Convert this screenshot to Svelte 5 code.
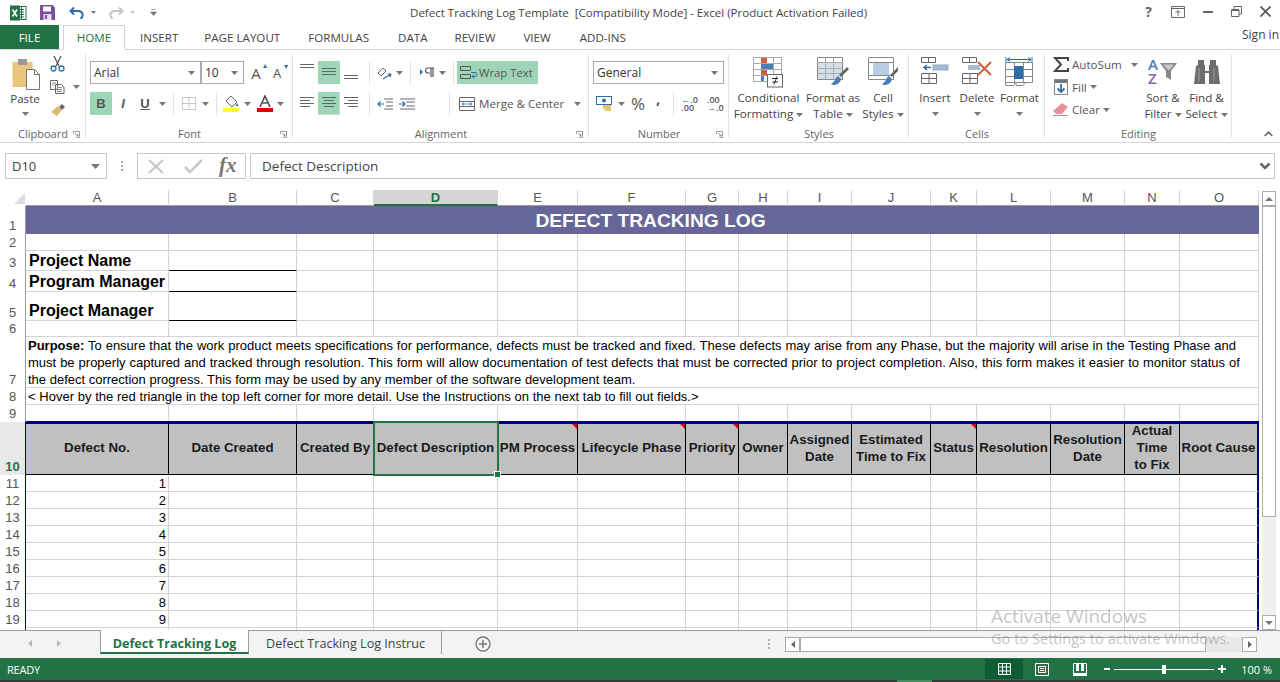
<script lang="ts">
	const columns = [
		{ name: 'A', width: 143 },
		{ name: 'B', width: 128 },
		{ name: 'C', width: 77 },
		{ name: 'D', width: 124 },
		{ name: 'E', width: 80 },
		{ name: 'F', width: 108 },
		{ name: 'G', width: 53 },
		{ name: 'H', width: 49 },
		{ name: 'I', width: 64 },
		{ name: 'J', width: 79 },
		{ name: 'K', width: 46 },
		{ name: 'L', width: 74 },
		{ name: 'M', width: 74 },
		{ name: 'N', width: 55 },
		{ name: 'O', width: 79 }
	];
	// row 20 is only a sliver above the sheet tabs
	const rowHeights = [28, 17, 20, 21, 29, 16, 51, 17, 17, 53, 17, 17, 17, 17, 17, 17, 17, 17, 17, 17];
	const headers = [
		{ t: 'Defect No.' },
		{ t: 'Date Created' },
		{ t: 'Created By' },
		{ t: 'Defect Description', active: true },
		{ t: 'PM Process', mark: true },
		{ t: 'Lifecycle Phase', mark: true },
		{ t: 'Priority', mark: true },
		{ t: 'Owner' },
		{ t: 'Assigned\nDate' },
		{ t: 'Estimated\nTime to Fix' },
		{ t: 'Status', mark: true },
		{ t: 'Resolution' },
		{ t: 'Resolution\nDate' },
		{ t: 'Actual\nTime\nto Fix' },
		{ t: 'Root Cause' }
	];
	const gridCols = columns.map((c) => c.width + 'px').join(' ');
	const gridRows = rowHeights.map((h) => h + 'px').join(' ');
	const defects = [1, 2, 3, 4, 5, 6, 7, 8, 9, ''];
	const middleColumns = columns.slice(1, -1);
</script>

{#snippet caret()}
	<svg class="caret" width="7" height="4" viewBox="0 0 7 4"><path d="M0 0h7L3.5 4z" fill="#777" /></svg>
{/snippet}

{#snippet launcher()}
	<svg class="launcher" width="7" height="7" viewBox="0 0 7 7"><path d="M.5 3V.5H6.500V6.500H3.500M2 2l3 3M5 3v2H3" fill="none" stroke="#888" stroke-width="0.800" /></svg>
{/snippet}

<div class="app">
	<header class="titlebar">
		<div class="qat">
			<svg width="17" height="16" viewBox="0 0 17 16">
				<rect x="6" y="1.5" width="10" height="13" fill="#fff" stroke="#217346" />
				<path d="M9 4.5h5M9 7h5M9 9.500h5M9 12h5M11.500 2v12" stroke="#217346" />
				<rect x="0" y="0.500" width="10" height="15" fill="#217346" />
				<path d="M2.500 4.500l4.500 7M7 4.500l-4.500 7" stroke="#fff" stroke-width="1.600" />
			</svg>
			<svg class="save" width="15" height="15" viewBox="0 0 15 15">
				<path d="M0 0h12.500L15 2.500V15H0z" fill="#7b4f9e" />
				<rect x="3" y="1.500" width="8" height="5" fill="#fff" />
				<rect x="3.500" y="9" width="8" height="6" fill="#e8e0ef" />
				<rect x="5" y="10" width="2" height="4" fill="#7b4f9e" />
			</svg>
			<svg class="undo" width="16" height="14" viewBox="0 0 16 14">
				<path d="M5 1.500L1.500 5 5 8.500" fill="none" stroke="#2f6ca8" stroke-width="2" />
				<path d="M2 5h7.500a4 4 0 0 1 3 6.800l-1 1" fill="none" stroke="#2f6ca8" stroke-width="2" />
			</svg>
			<svg class="q-caret" width="5" height="3" viewBox="0 0 5 3"><path d="M0 0h5L2.500 3z" fill="#777" /></svg>
			<svg class="redo" width="16" height="14" viewBox="0 0 16 14">
				<path d="M11 1.500L14.500 5 11 8.500" fill="none" stroke="#c4c4c4" stroke-width="2" />
				<path d="M14 5H6.500a4 4 0 0 0-3 6.800l1 1" fill="none" stroke="#c4c4c4" stroke-width="2" />
			</svg>
			<svg class="q-caret" width="5" height="3" viewBox="0 0 5 3"><path d="M0 0h5L2.500 3z" fill="#c4c4c4" /></svg>
			<svg class="custom" width="7" height="7" viewBox="0 0 7 7"><path d="M1 0.500h5M0.500 3h6L3.500 6.500z" fill="#777" stroke="#777" stroke-width="0.600" /></svg>
		</div>
		<div class="title">Defect Tracking Log Template&nbsp; [Compatibility Mode] - Excel (Product Activation Failed)</div>
		<div class="winbtns">
			<span class="help">?</span>
			<svg width="14" height="12" viewBox="0 0 14 12"><path d="M.5.500h13v11H.500zM.5 2.500h13M7 10V5M4.500 7L7 4.500 9.500 7" fill="none" stroke="#666" /></svg>
			<svg width="10" height="2" viewBox="0 0 10 2"><rect width="10" height="2" fill="#666" /></svg>
			<svg width="11" height="11" viewBox="0 0 11 11"><path d="M3 3V.500h7.500V8H8M.5 3.500H8v7H.5zM.5 4.500H8" fill="none" stroke="#666" /></svg>
			<svg width="11" height="11" viewBox="0 0 11 11"><path d="M.5.500l10 10M10.500.500l-10 10" stroke="#555" stroke-width="1.700" /></svg>
		</div>
	</header>

	<nav class="tabs">
		<div class="tab file">FILE</div>
		<div class="tab active">HOME</div>
		<div class="tab insert">INSERT</div>
		<div class="tab pagelayout">PAGE LAYOUT</div>
		<div class="tab formulas">FORMULAS</div>
		<div class="tab data">DATA</div>
		<div class="tab review">REVIEW</div>
		<div class="tab view">VIEW</div>
		<div class="tab addins">ADD-INS</div>
		<div class="signin">Sign in</div>
	</nav>

	<section class="ribbon">
		<div class="group clipboard">
			<div class="group-body">
				<div class="paste">
					<svg width="30" height="32" viewBox="0 0 30 32">
						<rect x="0.500" y="4" width="20" height="25" fill="#e9c57e" />
						<rect x="6" y="1" width="9" height="6" fill="#9a9a9a" />
						<path d="M14.500 11.500h8l5 5v15h-13z" fill="#fff" stroke="#777" />
						<path d="M22.500 11.500v5h5" fill="none" stroke="#777" />
					</svg>
					<span>Paste</span>
					{@render caret()}
				</div>
				<div class="clip-tools">
					<svg width="15" height="16" viewBox="0 0 15 16">
						<path d="M4 0l5 10M11 0L6 10" stroke="#555" stroke-width="1.300" />
						<circle cx="3.500" cy="12.500" r="2.500" fill="none" stroke="#2f6ca8" stroke-width="1.300" />
						<circle cx="11.500" cy="12.500" r="2.500" fill="none" stroke="#2f6ca8" stroke-width="1.300" />
					</svg>
					<div class="copy">
						<svg width="15" height="14" viewBox="0 0 15 14">
							<path d="M.5.500h7v9h-7zM5.500 4.500h6l2.500 2.500v6.500H5.500z" fill="#fff" stroke="#666" />
							<path d="M7 7.500h5M7 9.500h5M7 11.500h5M2 3h4M2 5h2" stroke="#888" />
						</svg>
						{@render caret()}
					</div>
					<svg width="16" height="14" viewBox="0 0 16 14">
						<path d="M9 5l3-3 3 3-3 3z" fill="#666" />
						<path d="M1 10l7-6 4 4-5 6z" fill="#e0b878" />
					</svg>
				</div>
			</div>
			<div class="group-label">Clipboard{@render launcher()}</div>
		</div>

		<div class="group font">
			<div class="group-body col">
				<div class="rowline">
					<div class="select fontname"><span>Arial</span>{@render caret()}</div>
					<div class="select fontsize"><span>10</span>{@render caret()}</div>
					<span class="grow">A<i>▴</i></span>
					<span class="shrink">A<i>▾</i></span>
				</div>
				<div class="rowline second">
					<span class="fmt on bold">B</span>
					<span class="fmt italic">I</span>
					<span class="fmt under">U</span>
					{@render caret()}
					<span class="sep"></span>
					<svg class="borders" width="14" height="13" viewBox="0 0 14 13"><path d="M.5.500h13v12H.5zM7 .5v12M.5 6.500h13" fill="none" stroke="#999" stroke-dasharray="1 1" /></svg>
					{@render caret()}
					<span class="sep"></span>
					<svg class="fill" width="17" height="17" viewBox="0 0 17 17">
						<path d="M8 1l6 6-5 5-6-6z" fill="#fff" stroke="#666" />
						<path d="M14 8l1.500 3h-3z" fill="#2f6ca8" />
						<rect x="0" y="13" width="16" height="4" fill="#ffff33" />
					</svg>
					{@render caret()}
					<svg class="color" width="16" height="17" viewBox="0 0 16 17">
						<path d="M3 12L8 1l5 11M5 8h6" fill="none" stroke="#555" stroke-width="1.700" />
						<rect y="13" width="16" height="4" fill="#e00000" />
					</svg>
					{@render caret()}
				</div>
			</div>
			<div class="group-label">Font{@render launcher()}</div>
		</div>

		<div class="group align">
			<div class="group-body col">
				<div class="rowline">
					<span class="ab top"><i></i><i></i></span>
					<span class="ab mid on"><i></i><i></i><i></i></span>
					<span class="ab bot"><i></i><i></i></span>
					<span class="sep"></span>
					<svg class="orient" width="15" height="16" viewBox="0 0 15 16">
						<path d="M1 8l5-5 3 3-5 5z" fill="none" stroke="#666" />
						<path d="M6 14l8-5M14 9h-3M14 9l-1 3" fill="none" stroke="#2f6ca8" stroke-width="1.100" />
					</svg>
					{@render caret()}
					<span class="sep"></span>
					<svg class="para" width="15" height="12" viewBox="0 0 15 12">
						<path d="M0 2l3 3-3 3z" fill="#2f6ca8" />
						<path d="M8 1h6M11 1v9M8 1a2.500 2.500 0 0 0 0 5h2M13 1v9" fill="none" stroke="#555" stroke-width="1.200" />
					</svg>
					{@render caret()}
					<span class="sep"></span>
					<div class="wide on">
						<svg width="18" height="14" viewBox="0 0 18 14">
							<path d="M.5.500h10v4h-10zM.5 8.500h10v4h-10z" fill="none" stroke="#555" />
							<path d="M11 6.500h4a2 2 0 0 1 0 4h-3M14 8.500L12 10.500l2 2" fill="none" stroke="#2f6ca8" />
						</svg>
						<span>Wrap Text</span>
					</div>
				</div>
				<div class="rowline second">
					<span class="ah"><i class="f"></i><i class="s"></i><i class="f"></i><i class="s"></i></span>
					<span class="ah c on"><i class="f"></i><i class="s"></i><i class="f"></i><i class="s"></i></span>
					<span class="ah r"><i class="f"></i><i class="s"></i><i class="f"></i><i class="s"></i></span>
					<span class="sep"></span>
					<svg class="indent" width="17" height="12" viewBox="0 0 17 12">
						<path d="M7 1h9M9 4h7M9 8h7M7 11h9" stroke="#666" />
						<path d="M7 6H1M3.500 3.500L1 6l2.500 2.500" fill="none" stroke="#2f6ca8" stroke-width="1.200" />
					</svg>
					<svg class="indent" width="17" height="12" viewBox="0 0 17 12">
						<path d="M1 1h15M7 4h9M7 8h9M1 11h15" stroke="#666" />
						<path d="M0 6h6M3.500 3.500L6 6 3.500 8.500" fill="none" stroke="#2f6ca8" stroke-width="1.200" />
					</svg>
					<span class="sep wrapsep"></span>
					<div class="wide merge">
						<svg width="17" height="14" viewBox="0 0 17 14">
							<path d="M.5.500h15v13H.5zM.5 4.500h15M.5 9.500h15" fill="none" stroke="#666" />
							<path d="M3 7h10M5 5.500L3 7l2 1.500M11 5.500L13 7l-2 1.500" fill="none" stroke="#2f6ca8" stroke-width="0.800" />
						</svg>
						<span>Merge &amp; Center</span>
						{@render caret()}
					</div>
				</div>
			</div>
			<div class="group-label">Alignment{@render launcher()}</div>
		</div>

		<div class="group number">
			<div class="group-body col">
				<div class="select general"><span>General</span>{@render caret()}</div>
				<div class="rowline second numrow">
					<svg class="acct" width="18" height="15" viewBox="0 0 18 15">
						<rect x="0.500" y="0.500" width="15" height="8" fill="#fff" stroke="#2f6ca8" />
						<circle cx="8" cy="4.500" r="2" fill="#2f6ca8" />
						<path d="M7 10h8M7 12h8M9 14h6" stroke="#e0b040" stroke-width="1.300" />
					</svg>
					{@render caret()}
					<span class="pct">%</span>
					<span class="comma">,</span>
					<span class="sep"></span>
					<span class="dec"><b class="ar">←</b>.0<br />.00</span>
					<span class="dec second-dec">.00<br /><b class="ar">→</b>.0</span>
				</div>
			</div>
			<div class="group-label">Number{@render launcher()}</div>
		</div>

		<div class="group styles">
			<div class="group-body big-row">
				<div class="big cond">
					<svg width="32" height="31" viewBox="0 0 32 31">
						<path d="M.5.500h28v24H.5zM10.500.5v24M20.500.5v24M.5 6.500h28M.5 12.500h28M.5 18.500h28" fill="#fff" stroke="#aaa" />
						<rect x="8" y="1" width="6" height="5" fill="#d1603d" />
						<rect x="8" y="7" width="12" height="5" fill="#4a7ebb" />
						<rect x="8" y="13" width="6" height="5" fill="#d1603d" />
						<rect x="8" y="19" width="3" height="5" fill="#4a7ebb" />
						<rect x="14.500" y="17.500" width="15" height="12.500" fill="#fff" stroke="#666" />
						<path d="M19 21.500h6M19 25h6M24 19.500l-3 8" stroke="#333" fill="none" />
					</svg>
					<span>Conditional</span>
					<span>Formatting {@render caret()}</span>
				</div>
				<div class="big fmt-table">
					<svg width="32" height="31" viewBox="0 0 32 31">
						<path d="M.5.500h25v22H.5z" fill="#fff" stroke="#888" />
						<rect x="1" y="5" width="24" height="17" fill="#d5dfec" />
						<path d="M.5 5.500h25M.5 11.500h25M.5 16.500h25M8.500.5v22M16.500.5v22" stroke="#aaa" fill="none" />
						<path d="M30 10L22 18l2 2 8-8z" fill="#666" />
						<path d="M21 19c-3 1-2 5-7 8 5 3 10-2 10-5z" fill="#4a7ebb" />
					</svg>
					<span>Format as</span>
					<span>Table {@render caret()}</span>
				</div>
				<div class="big cell">
					<svg width="30" height="31" viewBox="0 0 30 31">
						<path d="M.5.500h25v22H.5z" fill="#fff" stroke="#888" />
						<rect x="5" y="6" width="16" height="12" fill="#b8cce4" />
						<path d="M.5 5.500h25M.5 18.500h25" stroke="#888" fill="none" />
						<path d="M30 10L22 18l2 2 8-8z" fill="#666" />
						<path d="M21 19c-3 1-2 5-7 8 5 3 10-2 10-5z" fill="#4a7ebb" />
					</svg>
					<span>Cell</span>
					<span>Styles {@render caret()}</span>
				</div>
			</div>
			<div class="group-label">Styles</div>
		</div>

		<div class="group cells">
			<div class="group-body big-row">
				<div class="big ins">
					<svg width="28" height="31" viewBox="0 0 28 31">
						<path d="M.5.500h14v5H.5zM7.500.5v5M.5 16.500h15v10H.5zM8 16.500v10M.5 21.500h15" fill="none" stroke="#666" />
						<rect x="12" y="8" width="15" height="5" fill="#a6bcd6" stroke="#8fa8c4" />
						<path d="M10 10.500H3M6 8L3 10.500 6 13" fill="none" stroke="#2f6ca8" stroke-width="1.500" />
					</svg>
					<span>Insert</span>
					{@render caret()}
				</div>
				<div class="big del">
					<svg width="30" height="31" viewBox="0 0 30 31">
						<path d="M.5.500h14v5H.5zM7.500.5v5M.5 16.500h15v10H.5zM8 16.500v10M.5 21.500h15" fill="none" stroke="#666" />
						<rect x="6" y="8" width="12" height="5" fill="#a6bcd6" />
						<path d="M16 5l13 13M29 5L16 18" stroke="#d1603d" stroke-width="2" />
					</svg>
					<span>Delete</span>
					{@render caret()}
				</div>
				<div class="big format">
					<svg width="29" height="31" viewBox="0 0 29 31">
						<path d="M1 0v5M27 0v5M2 2.500h24M2 2.500l3-2M2 2.500l3 2M26 2.500l-3-2M26 2.500l-3 2" fill="none" stroke="#2f6ca8" />
						<path d="M.5 5.500h27v20H.5zM9.500 5.500v20M18.500 5.500v20M.5 12.500h27M.5 19.500h27" fill="#fff" stroke="#888" />
						<rect x="9" y="9" width="9" height="13" fill="#2f6ca8" />
						<path d="M.5 25.500v3h8l2-3M11 25.500v3h7l2-3" fill="none" stroke="#888" />
					</svg>
					<span>Format</span>
					{@render caret()}
				</div>
			</div>
			<div class="group-label">Cells</div>
		</div>

		<div class="group editing">
			<div class="group-body edit-body">
				<div class="edit-list">
					<div class="edit-item sum">
						<svg width="16" height="15" viewBox="0 0 16 15"><path d="M15 4V1H2l6 6.500L2 14h13v-3" fill="none" stroke="#444" stroke-width="2" /></svg>
						<span>AutoSum</span>
						{@render caret()}
					</div>
					<div class="edit-item">
						<svg width="14" height="16" viewBox="0 0 14 16"><rect x="0.500" y="0.500" width="13" height="15" fill="#fff" stroke="#888" /><rect x="1" y="1" width="12" height="3" fill="#777" /><path d="M7 5v8M3.500 9.500L7 13l3.500-3.500" fill="none" stroke="#2f6ca8" stroke-width="1.800" /></svg>
						<span>Fill</span>
						{@render caret()}
					</div>
					<div class="edit-item">
						<svg width="16" height="13" viewBox="0 0 16 13"><path d="M9 0l6 4-6 7H3L0 8z" fill="#e8909c" /><path d="M0 12.500h15" stroke="#999" /></svg>
						<span>Clear</span>
						{@render caret()}
					</div>
				</div>
				<div class="big sort">
					<div class="sort-icon">
						<span class="az a">A</span>
						<span class="az z">Z</span>
						<svg width="18" height="18" viewBox="0 0 18 18"><path d="M0 0h17l-6 8v9l-5-3V8z" fill="#888" /><path d="M3 1.500h11L9.500 7H8z" fill="#c8c8c8" /></svg>
					</div>
					<span>Sort &amp;</span>
					<span>Filter {@render caret()}</span>
				</div>
				<div class="big find">
					<svg width="26" height="24" viewBox="0 0 26 24">
						<path d="M4 0h6v5h1v6h4V5h1V0h6v5l2 1 2 18H15V13h-4v11H0L2 6l2-1z" fill="#6d6d6d" />
						<path d="M5 8v13M20 8v13" stroke="#8f8f8f" stroke-width="1.500" />
					</svg>
					<span>Find &amp;</span>
					<span>Select {@render caret()}</span>
				</div>
			</div>
			<div class="group-label">Editing</div>
		</div>
		<svg class="collapse" width="9" height="6" viewBox="0 0 9 6"><path d="M.7 5l3.800-3.800L8.300 5" fill="none" stroke="#666" stroke-width="1.600" /></svg>
	</section>

	<div class="formulabar">
		<div class="namebox"><span>D10</span><svg width="9" height="5" viewBox="0 0 9 5"><path d="M0 0h9L4.500 5z" fill="#777" /></svg></div>
		<div class="dots"><i></i><i></i><i></i></div>
		<div class="fx-btns">
			<svg width="18" height="15" viewBox="0 0 18 15"><path d="M2 1l14 13M16 1L2 14" stroke="#c8c8c8" stroke-width="2.200" /></svg>
			<svg width="19" height="15" viewBox="0 0 19 15"><path d="M1 8l5 5L18 1" fill="none" stroke="#c8c8c8" stroke-width="2.600" /></svg>
			<span class="fx">fx</span>
		</div>
		<div class="formula-input">
			<span>Defect Description</span>
			<svg width="12" height="8" viewBox="0 0 12 8"><path d="M1.500 1.500L6 6l4.500-4.500" fill="none" stroke="#666" stroke-width="2.500" /></svg>
		</div>
	</div>

	<main class="sheetarea">
		<div class="sheet">
			<div class="corner-row">
				<div class="corner"><svg width="11" height="11" viewBox="0 0 11 11"><path d="M11 0v11H0z" fill="#dcdcdc" /></svg></div>
				<div class="colheads" style="grid-template-columns: {gridCols}">
					{#each columns as c}
						<div class="colhead" class:sel={c.name === 'D'}>{c.name}</div>
					{/each}
				</div>
			</div>
			<div class="body-row">
				<div class="rowheads" style="grid-template-rows: {gridRows}">
					{#each rowHeights as _, i}
						<div class="rowhead" class:sel={i === 9} class:framed={i >= 9}>{i < 19 ? i + 1 : ''}</div>
					{/each}
				</div>
				<div class="cells-grid" style="grid-template-columns: {gridCols}; grid-template-rows: {gridRows}">
					<div class="title-cell">DEFECT TRACKING LOG</div>

					{#each columns as _}<div class="c"></div>{/each}

					<div class="c label">Project Name</div>
					<div class="c ul"></div>
					{#each columns.slice(2) as _}<div class="c"></div>{/each}

					<div class="c label">Program Manager</div>
					<div class="c ul"></div>
					{#each columns.slice(2) as _}<div class="c"></div>{/each}

					<div class="c label">Project Manager</div>
					<div class="c ul"></div>
					{#each columns.slice(2) as _}<div class="c"></div>{/each}

					{#each columns as _}<div class="c"></div>{/each}

					<div class="purpose">
						<p class="l1"><b>Purpose:</b> To ensure that the work product meets specifications for performance, defects must be tracked and fixed. These defects may arise from any Phase, but the majority will arise in the Testing Phase and</p>
						<p class="l2">must be properly captured and tracked through resolution. This form will allow documentation of test defects that must be corrected prior to project completion. Also, this form makes it easier to monitor status of</p>
						<p>the defect correction progress. This form may be used by any member of the software development team.</p>
					</div>
					<div class="hover-note">&lt; Hover by the red triangle in the top left corner for more detail. Use the Instructions on the next tab to fill out fields.&gt;</div>

					{#each columns as _}<div class="c"></div>{/each}

					{#each headers as h, i}
						<div class="th" class:active={h.active} class:end={i === headers.length - 1}>
							<span>{h.t}</span>
							{#if h.mark}<i class="redmark"></i>{/if}
							{#if h.active}<i class="handle"></i>{/if}
						</div>
					{/each}

					{#each defects as n}
						<div class="c num">{n}</div>
						{#each middleColumns as _}<div class="c"></div>{/each}
						<div class="c framed-end"></div>
					{/each}
				</div>
			</div>
		</div>
		<div class="vscroll">
			<div class="sbtn"><svg width="8" height="4" viewBox="0 0 8 4"><path d="M0 4h8L4 0z" fill="#777" /></svg></div>
			<div class="thumb"></div>
			<div class="sbtn"><svg width="8" height="4" viewBox="0 0 8 4"><path d="M0 0h8L4 4z" fill="#777" /></svg></div>
		</div>
	</main>

	<div class="sheetbar">
		<div class="navs">
			<svg width="4" height="7" viewBox="0 0 4 7"><path d="M4 0v7L0 3.500z" fill="#bbb" /></svg>
			<svg width="4" height="7" viewBox="0 0 4 7"><path d="M0 0v7l4-3.500z" fill="#bbb" /></svg>
		</div>
		<div class="sheettab current">Defect Tracking Log</div>
		<div class="sheettab">Defect Tracking Log Instruc</div>
		<svg class="addsheet" width="16" height="16" viewBox="0 0 16 16"><circle cx="8" cy="8" r="7" fill="none" stroke="#777" stroke-width="1.300" /><path d="M8 4v8M4 8h8" stroke="#777" stroke-width="1.500" /></svg>
		<div class="dots bar-dots"><i></i><i></i><i></i></div>
		<div class="hscroll">
			<div class="hbtn"><svg width="4" height="7" viewBox="0 0 4 7"><path d="M4 0v7L0 3.500z" fill="#666" /></svg></div>
			<div class="hthumb"></div>
			<div class="htrack"></div>
			<div class="hbtn"><svg width="4" height="7" viewBox="0 0 4 7"><path d="M0 0v7l4-3.500z" fill="#666" /></svg></div>
		</div>
	</div>

	<footer class="statusbar">
		<span class="ready">READY</span>
		<div class="views">
			<div class="view-btn on">
				<svg width="13" height="12" viewBox="0 0 13 12"><path d="M.5.500h12v11H.5zM4.500.5v11M8.500.5v11M.5 4h12M.5 8h12" fill="none" stroke="#fff" /></svg>
			</div>
			<div class="view-btn">
				<svg width="14" height="13" viewBox="0 0 14 13"><path d="M.5.500h13v12H.5zM3.500 3.500h7v6h-7zM5 5.500h4M5 7.500h4" fill="none" stroke="#fff" /></svg>
			</div>
			<div class="view-btn">
				<svg width="14" height="13" viewBox="0 0 14 13"><path d="M.5.500h13v12H.5z" fill="none" stroke="#fff" /><path d="M3 0h3v8H3zM8 0h3v8H8z M0 10h14v3H0z" fill="#fff" /></svg>
			</div>
		</div>
		<div class="zoom">
			<span class="zbtn minus"></span>
			<span class="ztrack"><i></i></span>
			<svg width="8" height="8" viewBox="0 0 8 8"><path d="M4 0v8M0 4h8" stroke="#fff" stroke-width="2" /></svg>
			<span class="zpct">100 %</span>
		</div>
	</footer>
	<div class="taskbar"><i></i></div>

	<div class="activate">
		<div class="a1">Activate Windows</div>
		<div class="a2">Go to Settings to activate Windows.</div>
	</div>
</div>

<style>
	:global(body) {
		margin: 0;
		background: #fff;
	}

	.app {
		width: 1280px;
		height: 682px;
		position: relative;
		overflow: hidden;
		display: flex;
		flex-direction: column;
		font-family: 'Open Sans', 'Noto Sans', sans-serif;
		color: #444;
		font-size: 11.600px;
	}

	.app i {
		font-style: normal;
	}

	/* title bar */
	.titlebar {
		height: 25px;
		display: flex;
		align-items: center;
		position: relative;
		flex: none;
	}

	.qat {
		display: flex;
		align-items: center;
		padding-left: 10px;
	}

	.save {
		margin-left: 13px;
	}
	.undo {
		margin-left: 14px;
	}
	.q-caret {
		margin-left: 6px;
	}
	.redo {
		margin-left: 12px;
	}
	.custom {
		margin-left: 15px;
	}

	.title {
		position: absolute;
		left: 410px;
		top: 5px;
		color: #444;
		white-space: nowrap;
		letter-spacing: -0.03px;
	}

	.winbtns {
		margin-left: auto;
		display: flex;
		align-items: center;
		gap: 18px;
		padding: 0 9px 2px 0;
	}

	.help {
		font-weight: 700;
		font-size: 14px;
		color: #666;
		margin-right: 1px;
	}

	/* tabs */
	.tabs {
		height: 25px;
		flex: none;
		display: flex;
		align-items: stretch;
		border-bottom: 1px solid #d4d4d4;
		box-sizing: border-box;
		position: relative;
	}

	.tab {
		display: flex;
		align-items: center;
		justify-content: center;
		color: #444;
	}

	.file {
		width: 59px;
		background: #217346;
		color: #fff;
	}

	.tab.active {
		width: 62px;
		margin-left: 4px;
		color: #217346;
		background: #fff;
		border: 1px solid #d4d4d4;
		border-bottom: 1px solid #fff;
		height: 25px;
		box-sizing: border-box;
	}

	.insert {
		margin-left: 15px;
	}
	.pagelayout {
		margin-left: 26px;
	}
	.formulas {
		margin-left: 28px;
	}
	.data {
		margin-left: 29px;
	}
	.review {
		margin-left: 27px;
	}
	.view {
		margin-left: 28px;
	}
	.addins {
		margin-left: 29px;
	}

	.signin {
		margin-left: auto;
		align-self: flex-start;
		padding-top: 1px;
		padding-right: 1px;
		font-size: 12px;
	}

	/* ribbon */
	.ribbon {
		height: 93px;
		flex: none;
		display: flex;
		border-bottom: 1px solid #d4d4d4;
		box-sizing: border-box;
		position: relative;
	}

	.group {
		display: flex;
		flex-direction: column;
		position: relative;
		flex: none;
		box-sizing: border-box;
	}

	.group::after {
		content: '';
		position: absolute;
		right: 0;
		top: 4px;
		bottom: 4px;
		width: 1px;
		background: #e1e1e1;
	}

	.group-body {
		height: 76px;
		flex: none;
	}

	.group-label {
		position: relative;
		height: 16px;
		line-height: 15px;
		text-align: center;
		font-size: 11px;
		color: #666;
	}

	.launcher {
		position: absolute;
		right: 6px;
		top: 5px;
	}

	.caret {
		flex: none;
		vertical-align: middle;
	}

	.clipboard {
		width: 86px;
	}
	.font {
		width: 207px;
	}
	.align {
		width: 296px;
	}
	.number {
		width: 140px;
	}
	.styles {
		width: 180px;
	}
	.cells {
		width: 136px;
	}
	.editing {
		width: 187px;
	}

	.clipboard .group-body {
		display: flex;
	}

	.paste {
		width: 48px;
		display: flex;
		flex-direction: column;
		align-items: center;
		padding-top: 8px;
		padding-left: 2px;
		box-sizing: border-box;
	}

	.paste > svg:first-child {
		margin-left: 3px;
	}

	.paste span {
		line-height: 17px;
	}

	.paste > .caret {
		margin-top: 5px;
	}

	.clip-tools {
		display: flex;
		flex-direction: column;
		padding-top: 6px;
		padding-left: 2px;
		gap: 8px;
	}

	.copy {
		display: flex;
		align-items: center;
		gap: 8px;
	}

	.col {
		display: flex;
		flex-direction: column;
		padding-top: 11px;
		box-sizing: border-box;
	}

	.rowline {
		display: flex;
		align-items: center;
		height: 23px;
	}

	.rowline.second {
		margin-top: 8px;
	}

	.select {
		box-sizing: border-box;
		height: 23px;
		border: 1px solid #ababab;
		display: flex;
		align-items: center;
		justify-content: space-between;
		padding: 0 5px 0 3px;
		color: #333;
		font-size: 12px;
	}

	.font .col {
		padding-left: 4px;
	}

	.fontname {
		width: 111px;
	}

	.fontsize {
		width: 43px;
		margin-left: 0;
	}

	.grow,
	.shrink {
		position: relative;
		display: inline-block;
		width: 14px;
		text-align: center;
		color: #555;
	}

	.grow {
		margin-left: 5px;
		font-size: 15px;
	}

	.shrink {
		margin-left: 7px;
		font-size: 13px;
	}

	.grow i,
	.shrink i {
		position: absolute;
		right: -4px;
		top: -4px;
		font-size: 8px;
		color: #2f6ca8;
	}

	.fmt {
		width: 22px;
		height: 23px;
		display: flex;
		align-items: center;
		justify-content: center;
		font-family: 'Liberation Sans', sans-serif;
		font-size: 13px;
		color: #555;
		flex: none;
	}

	.fmt.on,
	.wide.on,
	.ab.on,
	.ah.on {
		background: #9fd5b7;
	}

	.bold {
		font-weight: 700;
	}
	.italic {
		font-style: italic;
		font-weight: 700;
	}
	.under {
		text-decoration: underline;
		font-weight: 700;
	}
	.second .under + .caret {
		margin-left: 3px;
	}

	.sep {
		width: 1px;
		height: 22px;
		background: #e1e1e1;
		flex: none;
		margin: 0 7px;
	}

	.borders {
		margin-left: 1px;
		margin-right: 6px;
	}

	.fill {
		margin-left: -1px;
		margin-right: 4px;
	}

	.color {
		margin-left: 6px;
		margin-right: 4px;
	}

	.align .col {
		padding-left: 3px;
	}

	.ab,
	.ah {
		width: 22px;
		height: 23px;
		display: flex;
		flex-direction: column;
		align-items: center;
		flex: none;
		gap: 2px;
		box-sizing: border-box;
	}

	.ab i {
		width: 14px;
		height: 1px;
		background: #666;
		display: block;
	}

	.ab.top {
		padding-top: 3px;
	}
	.ab.mid {
		padding-top: 7px;
	}
	.ab.bot {
		padding-top: 14px;
	}

	.ah {
		align-items: flex-start;
		padding: 5px 4px 0;
	}

	.ah i {
		height: 1px;
		background: #666;
		display: block;
	}

	.ah i.f {
		width: 14px;
	}
	.ah i.s {
		width: 10px;
	}
	.ah.c {
		align-items: center;
	}
	.ah.r {
		align-items: flex-end;
	}

	.orient {
		margin-left: 0;
		margin-right: 4px;
	}

	.para {
		margin-left: 2px;
		margin-right: 4px;
	}

	.wide {
		display: flex;
		align-items: center;
		gap: 1px;
		height: 23px;
		padding: 0 0 0 3px;
		color: #555;
		flex: none;
		box-sizing: border-box;
		white-space: nowrap;
	}

	.wide svg {
		flex: none;
	}

	.wide.on {
		margin-left: -4px;
		width: 81px;
		font-size: 11.300px;
	}

	.indent {
		margin-left: 0;
		margin-right: 5px;
	}

	.wrapsep {
		margin-left: 28px;
		margin-right: 9px;
	}

	.merge {
		gap: 3px;
		padding-left: 0;
	}

	.merge .caret {
		margin-left: 7px;
	}

	.number .col {
		padding-left: 4px;
	}

	.general {
		width: 131px;
		flex: none;
	}

	.numrow {
		padding-left: 3px;
	}

	.acct {
		margin-right: 4px;
	}

	.pct {
		font-size: 17px;
		margin-left: 6px;
		color: #555;
	}

	.comma {
		font-weight: 700;
		font-size: 15px;
		margin-left: 11px;
		margin-top: -12px;
		color: #555;
	}

	.numrow .sep {
		margin-left: 13px;
		margin-right: 7px;
	}

	.dec {
		font-size: 9px;
		line-height: 8px;
		font-weight: 600;
		color: #555;
		white-space: nowrap;
	}

	.second-dec {
		margin-left: 9px;
	}

	.ar {
		color: #2f6ca8;
		font-weight: 400;
	}

	.big-row {
		display: flex;
	}

	.big {
		display: flex;
		flex-direction: column;
		align-items: center;
		padding-top: 7px;
		box-sizing: border-box;
		white-space: nowrap;
		color: #444;
	}

	.big > svg:first-child,
	.sort-icon {
		margin-bottom: 2px;
	}

	.big > span {
		line-height: 16px;
	}

	.big > .caret {
		margin-top: 6px;
	}

	.cond {
		width: 77px;
		margin-left: 1px;
	}
	.fmt-table {
		width: 50px;
		margin-left: 1px;
	}
	.cell {
		width: 48px;
		margin-left: 1px;
	}
	.ins {
		width: 42px;
		margin-left: 5px;
	}
	.del {
		width: 42px;
	}
	.format {
		width: 43px;
	}

	.edit-body {
		display: flex;
	}

	.edit-list {
		width: 96px;
		padding: 5px 0 0 8px;
		display: flex;
		flex-direction: column;
		gap: 3.500px;
		box-sizing: border-box;
	}

	.edit-item {
		display: flex;
		align-items: center;
		height: 19px;
		gap: 3px;
		color: #555;
	}

	.edit-item > svg:first-child {
		width: 16px;
	}

	.sum .caret {
		margin-left: 6px;
	}

	.sort {
		width: 44px;
	}

	.sort-icon {
		position: relative;
		width: 32px;
		height: 31px;
		display: block;
	}

	.sort-icon svg {
		position: absolute;
		left: 13px;
		top: 6px;
	}

	.az {
		position: absolute;
		left: 1px;
		font-size: 15px;
		font-weight: 600;
		line-height: 14px;
	}

	.az.a {
		top: 0;
		color: #4a7ebb;
	}

	.az.z {
		top: 14px;
		color: #8a5fa8;
	}

	.find {
		width: 43px;
	}

	.big.find > svg:first-child {
		margin-top: 3px;
		margin-bottom: 6px;
	}

	.collapse {
		position: absolute;
		right: 7px;
		bottom: 5px;
	}

	/* formula bar */
	.formulabar {
		height: 47px;
		box-sizing: border-box;
		flex: none;
		display: flex;
		align-items: flex-start;
		padding: 10px 0 0 5px;
	}

	.namebox {
		width: 102px;
		height: 26px;
		border: 1px solid #c6c6c6;
		box-sizing: border-box;
		display: flex;
		align-items: center;
		justify-content: space-between;
		padding: 0 6px;
		font-size: 13px;
		color: #444;
	}

	.dots {
		display: flex;
		flex-direction: column;
		gap: 2px;
		width: 2px;
		margin-left: 14px;
		padding-top: 8px;
	}

	.dots i {
		width: 2px;
		height: 2px;
		background: #aaa;
		display: block;
	}

	.fx-btns {
		margin-left: 14px;
		width: 109px;
		height: 26px;
		border: 1px solid #c6c6c6;
		box-sizing: border-box;
		display: flex;
		align-items: center;
		padding-left: 9px;
		gap: 19px;
	}

	.fx {
		font-family: 'Liberation Serif', serif;
		font-style: italic;
		font-weight: 700;
		font-size: 21px;
		color: #777;
		margin-left: -3px;
		line-height: 20px;
		margin-top: -3px;
	}

	.formula-input {
		margin-left: 4px;
		width: 1025px;
		height: 26px;
		border: 1px solid #c6c6c6;
		box-sizing: border-box;
		display: flex;
		align-items: center;
		justify-content: space-between;
		padding: 0 3px 0 11px;
		font-size: 13.500px;
		color: #444;
		flex: none;
	}

	/* sheet */
	.sheetarea {
		flex: none;
		height: 440px;
		display: flex;
		overflow: hidden;
		font-family: 'Liberation Sans', Arial, sans-serif;
	}

	.sheet {
		flex: none;
		height: 440px;
		overflow: hidden;
	}

	.corner-row {
		display: flex;
		height: 16px;
	}

	.corner {
		width: 26px;
		flex: none;
		box-sizing: border-box;
		padding: 3px 0 0 14px;
		line-height: 0;
		background: #fff;
	}

	.colheads {
		display: grid;
	}

	.colhead {
		font-size: 13px;
		line-height: 15px;
		text-align: center;
		color: #555;
		border-right: 1px solid #d4d4d4;
		border-bottom: 1px solid #9c9c9c;
		box-sizing: border-box;
		height: 16px;
	}

	.colhead.sel {
		background: #d6d6d6;
		color: #217346;
		font-weight: 700;
		border-bottom: 2px solid #217346;
	}

	.body-row {
		display: flex;
		align-items: flex-start;
	}

	.rowheads {
		width: 26px;
		flex: none;
		display: grid;
		box-sizing: border-box;
	}

	.rowhead {
		font-size: 13px;
		color: #555;
		display: flex;
		align-items: flex-end;
		justify-content: center;
		line-height: 15px;
		box-sizing: border-box;
		padding-bottom: 1px;
		border-right: 1px solid #9c9c9c;
		overflow: hidden;
	}

	.rowhead.framed {
		border-right: 1px solid #000080;
	}

	.rowhead.sel {
		background: #e8e8e8;
		color: #217346;
		font-weight: 700;
	}

	.cells-grid {
		display: grid;
		flex: none;
		position: relative;
		width: 1233px;
		color: #000;
	}

	.c {
		border-right: 1px solid #d4d4d4;
		border-bottom: 1px solid #d4d4d4;
		box-sizing: border-box;
		min-width: 0;
	}

	.title-cell {
		grid-column: 1 / -1;
		background: #666699;
		color: #fff;
		font-weight: 700;
		font-size: 19.200px;
		text-align: center;
		line-height: 29px;
		padding-left: 16px;
	}

	.label {
		font-weight: 700;
		font-size: 16px;
		white-space: nowrap;
		line-height: 18px;
		padding-left: 3px;
		display: flex;
		align-items: flex-end;
	}

	.ul {
		border-bottom: 1px solid #000;
	}

	.purpose {
		grid-column: 1 / -1;
		border-bottom: 1px solid #d4d4d4;
		border-right: 1px solid #d4d4d4;
		box-sizing: border-box;
		font-size: 13px;
		padding: 0 0 0 2px;
		color: #000;
	}

	.purpose p {
		margin: 0;
		line-height: 17px;
		white-space: nowrap;
	}

	.purpose .l1 {
		word-spacing: 0.300px;
	}

	.purpose .l2 {
		word-spacing: 0.360px;
	}

	.hover-note {
		grid-column: 1 / -1;
		border-bottom: 1px solid #d4d4d4;
		border-right: 1px solid #d4d4d4;
		box-sizing: border-box;
		font-size: 13px;
		line-height: 17px;
		padding-left: 2px;
		white-space: nowrap;
		word-spacing: 0.120px;
	}

	.th {
		background: #c0c0c0;
		border-top: 3px solid #000080;
		border-bottom: 1px solid #000;
		border-right: 1px solid #000;
		box-sizing: border-box;
		display: flex;
		align-items: center;
		justify-content: center;
		text-align: center;
		font-weight: 700;
		font-size: 13.300px;
		line-height: 17px;
		position: relative;
		color: #1a1a1a;
		min-width: 0;
		margin-top: -1px;
		padding: 0 1px 3px;
		white-space: pre-line;
	}

	.th.active {
		outline: 2px solid #217346;
		outline-offset: -1px;
		border-color: #fff;
		border-width: 1px;
		margin-top: 0;
		z-index: 2;
	}

	.th.end {
		border-right: 2px solid #000080;
	}

	.framed-end {
		border-right: 2px solid #000080;
	}

	.redmark {
		position: absolute;
		top: 0;
		right: 0;
		width: 0;
		height: 0;
		border-top: 5px solid #e00000;
		border-left: 5px solid transparent;
	}

	.handle {
		position: absolute;
		right: -4px;
		bottom: -4px;
		width: 5px;
		height: 5px;
		background: #217346;
		border: 1px solid #fff;
	}

	.num {
		font-size: 13px;
		text-align: right;
		line-height: 17px;
		padding-right: 2px;
		color: #000;
	}

	.vscroll {
		width: 14px;
		flex: none;
		box-sizing: border-box;
		height: 439px;
		margin-top: 1px;
		margin-left: 3px;
		display: flex;
		flex-direction: column;
		background: #f0f0f0;
	}

	.sbtn {
		height: 15px;
		background: #fff;
		border: 1px solid #ababab;
		box-sizing: border-box;
		display: flex;
		align-items: center;
		justify-content: center;
		flex: none;
	}

	.thumb {
		height: 311px;
		background: #fff;
		border: 1px solid #ababab;
		box-sizing: border-box;
		flex: none;
		margin-bottom: auto;
	}

	/* sheet tabs */
	.sheetbar {
		height: 28px;
		flex: none;
		display: flex;
		align-items: flex-start;
		background: #f3f3f3;
		border-top: 1px solid #9c9c9c;
		box-sizing: border-box;
		position: relative;
	}

	.navs {
		width: 100px;
		padding: 9px 0 0 28px;
		box-sizing: border-box;
		display: flex;
		gap: 25px;
		flex: none;
	}

	.sheettab {
		height: 24px;
		margin-top: -1px;
		padding-top: 2px;
		font-size: 12.600px;
		white-space: nowrap;
		color: #444;
		box-sizing: border-box;
		flex: none;
		display: flex;
		align-items: center;
	}

	.sheettab.current {
		width: 149px;
		justify-content: center;
		padding-top: 4px;
		background: #fff;
		border-left: 1px solid #9c9c9c;
		border-right: 1px solid #9c9c9c;
		border-bottom: 2px solid #217346;
		color: #217346;
		font-weight: 700;
	}

	.sheettab:not(.current) {
		width: 193px;
		padding-left: 17px;
		border-right: 1px solid #9c9c9c;
	}

	.addsheet {
		margin: 5px 0 0 33px;
		flex: none;
	}

	.bar-dots {
		margin-left: 277px;
		padding-top: 8px;
	}

	.hscroll {
		margin-left: 15px;
		margin-top: 6px;
		width: 472px;
		height: 15px;
		display: flex;
		flex: none;
	}

	.hbtn {
		width: 15px;
		height: 15px;
		background: #fff;
		border: 1px solid #ababab;
		box-sizing: border-box;
		display: flex;
		align-items: center;
		justify-content: center;
		flex: none;
	}

	.hthumb {
		width: 406px;
		background: #fff;
		border: 1px solid #ababab;
		box-sizing: border-box;
		flex: none;
	}

	.htrack {
		flex: 1;
		background: #e9e9e9;
	}

	/* status bar */
	.statusbar {
		height: 22px;
		flex: none;
		background: #217346;
		color: #fff;
		display: flex;
		align-items: center;
		font-size: 11px;
		box-sizing: border-box;
	}

	.taskbar {
		height: 2px;
		flex: none;
		background: #3a3a3a;
		position: relative;
	}

	.taskbar i {
		display: block;
		width: 35px;
		height: 2px;
		margin-left: 897px;
		background: #4a8a62;
	}

	.ready {
		padding-left: 7px;
		letter-spacing: -0.2px;
	}

	.views {
		margin-left: auto;
		display: flex;
		height: 20px;
		margin-right: 5px;
	}

	.view-btn {
		width: 38px;
		display: flex;
		align-items: center;
		justify-content: center;
	}

	.view-btn.on {
		background: #0f5c33;
	}

	.zoom {
		display: flex;
		align-items: center;
		padding-right: 8px;
	}

	.zbtn.minus {
		width: 6px;
		height: 2px;
		background: #fff;
	}

	.ztrack {
		width: 100px;
		height: 1px;
		background: #fff;
		margin: 0 4px;
		position: relative;
		display: block;
	}

	.ztrack i {
		position: absolute;
		left: 48px;
		top: -4px;
		width: 4px;
		height: 9px;
		background: #fff;
	}

	.zpct {
		margin-left: 15px;
	}

	/* watermark over the sheet */
	.activate {
		position: absolute;
		left: 991px;
		top: 605px;
		color: rgba(120, 120, 120, 0.45);
		pointer-events: none;
		white-space: nowrap;
	}

	.a1 {
		font-size: 19px;
		line-height: 22px;
	}

	.a2 {
		font-size: 14.600px;
		line-height: 22px;
	}
</style>
